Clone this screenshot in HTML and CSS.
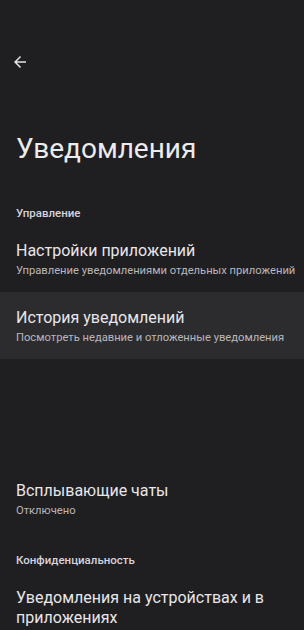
FILE: index.html
```html
<!DOCTYPE html>
<html lang="ru">
<head>
    <meta charset="UTF-8">
    <meta name="viewport" content="width=device-width, initial-scale=1.0">
    <title>Уведомления</title>
    <link rel="stylesheet" href="styles.css">
</head>
<body>
    <div class="screen">
        <div class="top-bar">
            <svg class="back-icon" viewBox="0 0 24 24" width="18" height="18">
                <path d="M20 11H7.83l5.59-5.59L12 4l-8 8 8 8 1.41-1.41L7.83 13H20v-2z" fill="#e6e1e5"/>
            </svg>
        </div>
        <h1 class="page-title">Уведомления</h1>

        <div class="section-label">Управление</div>
        <div class="pref-item">
            <div class="pref-title">Настройки приложений</div>
            <div class="pref-summary">Управление уведомлениями отдельных приложений</div>
        </div>
        <div class="pref-item pref-item-pressed">
            <div class="pref-title">История уведомлений</div>
            <div class="pref-summary">Посмотреть недавние и отложенные уведомления</div>
        </div>

        <div class="pref-item pref-item-gap">
            <div class="pref-title">Всплывающие чаты</div>
            <div class="pref-summary">Отключено</div>
        </div>

        <div class="section-label">Конфиденциальность</div>
        <div class="pref-item">
            <div class="pref-title">Уведомления на устройствах и в приложениях</div>
        </div>
    </div>
</body>
</html>
```

FILE: styles.css
```css
body {
    background-color: #1f1f21;
    color: #e6e1e5;
    font-family: Roboto, "Noto Sans", sans-serif;
    margin: 0;
    height: 630px;
    overflow: hidden;
}
.screen {
    display: flex;
    flex-direction: column;
}
.top-bar {
    padding: 53px 0 0 11px;
    height: 18px;
}
.back-icon {
    display: block;
}
.page-title {
    font-size: 28px;
    line-height: 36px;
    font-weight: 400;
    margin: 60px 16px 18px 16px;
    color: #ecebee;
}
.section-label {
    font-size: 11.5px;
    line-height: 16px;
    font-weight: 500;
    color: #d6d3de;
    padding: 20px 16px 4px 16px;
}
.pref-item {
    padding: 16px 16px 13px 16px;
}
.pref-item-pressed {
    background-color: #2c2c2e;
}
.pref-item-gap {
    margin-top: 106px;
}
.pref-title {
    font-size: 16px;
    line-height: 20px;
    color: #e8e6ea;
}
.pref-summary {
    font-size: 11.2px;
    line-height: 16px;
    margin-top: 2px;
    color: #b9b7bc;
    white-space: nowrap;
}
```
